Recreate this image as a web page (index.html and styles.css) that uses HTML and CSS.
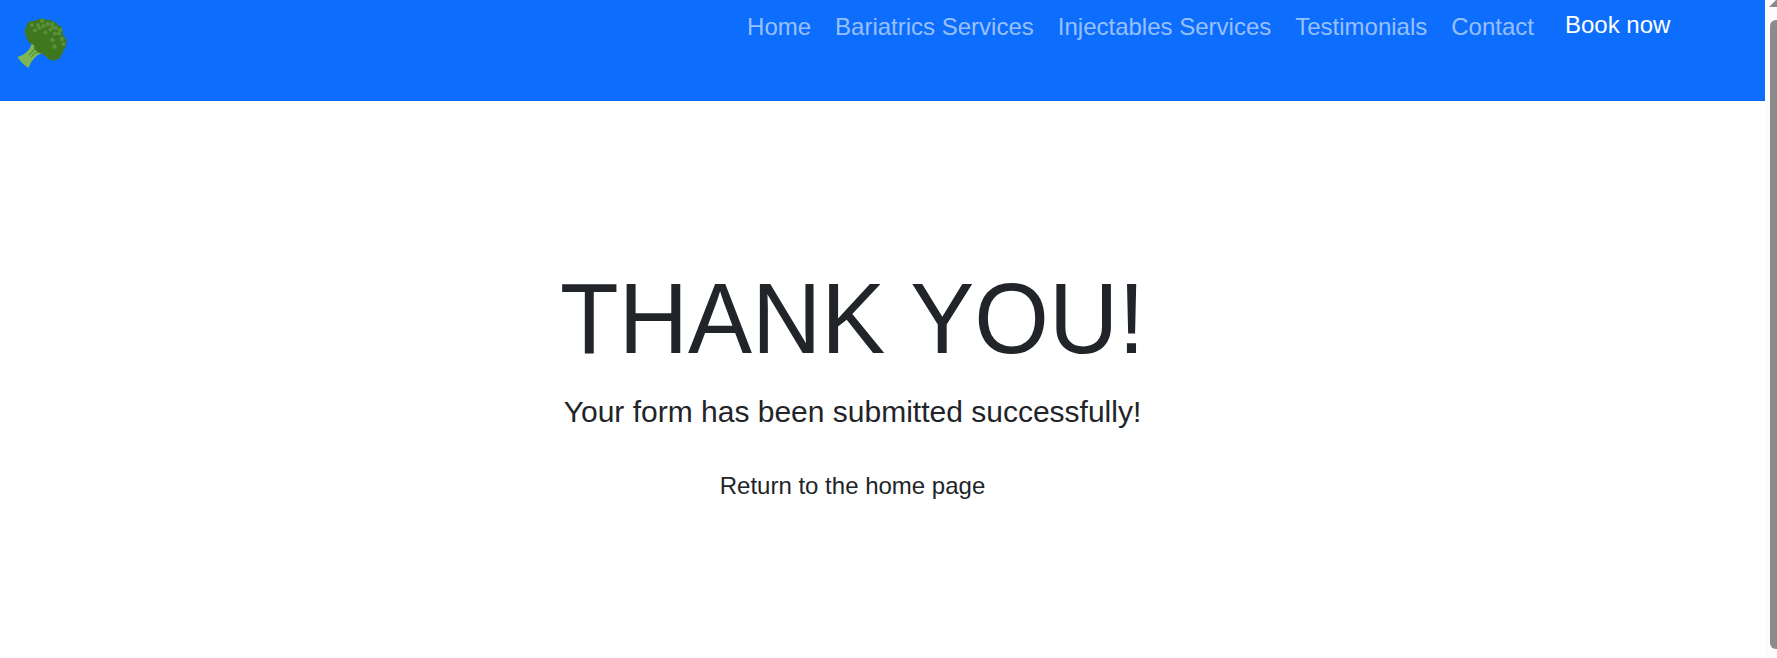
FILE: index.html
```
<!DOCTYPE html>
<html lang="en">
<head>
<meta charset="utf-8">
<title>Thank you</title>
<link rel="stylesheet" href="styles.css">
</head>
<body>
<div class="page">
<header class="navbar">
<a class="brand"><svg class="logo" viewBox="17 17 52 52" aria-label="Broccoli">
<path d="M32 43L42 53Q33 56 28.5 68Q22 64 17.3 57Q29 54 32 43Z" fill="#7cb657"/>
<path d="M35 48Q33 52 29 55M39 51Q34 53 31 57" fill="none" stroke="#559130" stroke-width="1.2"/>
<path d="M27 26Q26 23 29 22Q32 20 35 21Q37 19 40 19Q42 17 44 19Q46 20 48 20Q51 19 53 22Q56 21 58 25Q62 26 62 29Q64 32 62 35Q65 35 65 38Q68 41 66 45Q66 49 63 50Q64 54 61 55Q60 59 58 59Q55 62 52 60Q48 60 47 57Q44 56 42 53.5L38 52.5L34.5 49L34 45L31 43.5Q28 43 28 40Q25 38 26 35Q23 30 27 26Z" fill="#3f771e"/>
<g fill="#588f3a"><circle cx="32" cy="25" r="2.1"/><circle cx="42" cy="21" r="2.2"/><circle cx="38" cy="25" r="2.1"/><circle cx="35" cy="30.5" r="2.1"/><circle cx="39.5" cy="28" r="2.1"/><circle cx="43.5" cy="26" r="2.1"/><circle cx="47.5" cy="24" r="2.2"/><circle cx="52" cy="24" r="2.1"/><circle cx="50.5" cy="29.5" r="2.1"/><circle cx="53" cy="27" r="2.1"/><circle cx="56" cy="28" r="2.1"/><circle cx="60" cy="30" r="2.2"/><circle cx="55" cy="33.5" r="2.1"/><circle cx="59" cy="33.5" r="2.1"/><circle cx="45.5" cy="32.5" r="2.1"/><circle cx="62" cy="39" r="2.2"/><circle cx="52.5" cy="40" r="2.2"/><circle cx="63.5" cy="44" r="2.1"/><circle cx="54.5" cy="46.5" r="2.2"/></g>
</svg></a>
<nav class="links"><a>Home</a><a>Bariatrics Services</a><a>Injectables Services</a><a>Testimonials</a><a>Contact</a><a class="book">Book now</a></nav>
</header>
<main class="message"><h1>THANK YOU!</h1><p class="lead">Your form has been submitted successfully!</p><a class="return">Return to the home page</a></main>
</div>
<div class="scrollbar"><svg class="arrow" viewBox="0 0 8 7"><path d="M0 7L7 0H8V7Z" fill="#8b8b8b"/></svg><div class="thumb"></div></div>
</body>
</html>
```
FILE: styles.css
```
*{box-sizing:border-box}
body{margin:0;height:658px;display:flex;overflow:hidden;font-family:"Liberation Sans",Arial,sans-serif;font-size:24px;line-height:36px;color:#212529;background:#fff}
.page{width:1765px}
.navbar{height:101px;background:#0d6efd;display:flex;justify-content:space-between;padding:9px 94.6px 0 17px}
.logo{display:block;width:52px;height:52px;margin-top:8px}
.links{display:flex;gap:24px;color:rgba(255,255,255,.58)}
.book{color:#fff;margin:-2px 0 0 7px}
.message{width:1705px;padding-top:159px;display:flex;flex-direction:column;align-items:center}
h1{margin:0;font-size:96px;line-height:115px;font-weight:400;transform:scaleY(1.045)}
.lead{margin:14px 0 34px;font-size:30px;line-height:45px}
.scrollbar{width:12px;height:658px;padding:0 0 9px 4px;background:#fcfcfc;display:flex;flex-direction:column}
.arrow{display:block;width:8px;height:7px;margin-bottom:13px}
.thumb{background:#8b8b8b;flex:1;margin-left:1px;border-radius:6px 0 0 6px}
```
